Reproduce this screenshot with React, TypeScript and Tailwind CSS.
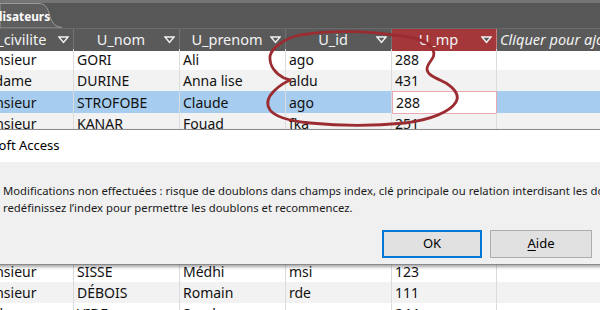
import React from 'react';

const font = { fontFamily: '"Segoe UI", "Noto Sans", "Open Sans", sans-serif' };

type Row = [string, string, string, string, string];

const rows: Row[] = [
  ['Monsieur', 'GORI', 'Ali', 'ago', '288'],
  ['Madame', 'DURINE', 'Anna lise', 'aldu', '431'],
  ['Monsieur', 'STROFOBE', 'Claude', 'ago', '288'],
  ['Monsieur', 'KANAR', 'Fouad', 'fka', '251'],
  ['Madame', 'BELLE', 'Julie', 'jbe', '302'],
  ['Monsieur', 'DURAND', 'Marc', 'mdu', '412'],
  ['Madame', 'PETIT', 'Sylvie', 'spe', '178'],
  ['Monsieur', 'LEROY', 'Paul', 'ple', '365'],
  ['Madame', 'MOREAU', 'Anne', 'amo', '209'],
  ['Monsieur', 'GARNIER', 'Luc', 'lga', '154'],
  ['Monsieur', 'SISSE', 'Médhi', 'msi', '123'],
  ['Monsieur', 'DÉBOIS', 'Romain', 'rde', '111'],
  ['Madame', 'VIDE', 'Sandra', 'vsa', '244'],
];

const cols = 'grid grid-cols-[103px_106px_106px_106px_105px_220px]';

const Arrow = () => (
  <svg width="11" height="8" viewBox="0 0 11 8" className="shrink-0">
    <polygon points="1,1 10,1 5.5,6.5" fill="#5a5a5a" stroke="#f2f2f2" strokeWidth="1.4" />
  </svg>
);

const HeadCell = ({ label, active }: { label: string; active?: boolean }) => (
  <div
    className={`flex items-center pr-[4px] border-r ${
      active ? 'bg-[#a4373a] border-[#c97b7d]' : 'bg-[#5a5a5a] border-[#727272]'
    }`}
  >
    <span className="flex-1 text-center text-[14.5px] text-[#f3f3f3] pl-[4px]">{label}</span>
    <Arrow />
  </div>
);

const App: React.FC = () => {
  return (
    <div className="relative w-[600px] h-[310px] overflow-hidden bg-white" style={font}>
      {/* onglet de la table */}
      <div className="h-[28px] bg-[#575757] border-t-[3px] border-[#747474] flex">
        <div className="relative w-[62px] h-full">
          <svg width="62" height="25" viewBox="0 0 62 25" className="absolute left-0 top-0">
            <path d="M0 0.5 H38 C45 0.5 47 4 49 10 C51 18 54 24 62 24.5 L62 25 L0 25 Z" fill="#5e5e5e" stroke="#9a9a9a" strokeWidth="1" />
          </svg>
          <span className="absolute left-[-1px] top-[5px] text-[11.8px] font-bold text-white">lisateurs</span>
        </div>
      </div>

      <div className="-ml-[29px]">
        {/* en-têtes */}
        <div className={`${cols} h-[21px] border-t border-[#6a6a6a]`}>
          <HeadCell label="U_civilite" />
          <HeadCell label="U_nom" />
          <HeadCell label="U_prenom" />
          <HeadCell label="U_id" />
          <HeadCell label="U_mp" active />
          <div className="bg-[#5a5a5a] flex items-center pl-[3px] text-[14.5px] italic text-[#f3f3f3]">Cliquer pour ajouter</div>
        </div>

        {rows.map((r, i) => {
          const selected = i === 2;
          const bg = selected ? 'bg-[#a6cdf0]' : i % 2 === 0 ? 'bg-white' : 'bg-[#f2f2f2]';
          return (
            <div key={i} className={`${cols} h-[21.2px] ${bg} text-[14px] text-[#111]`}>
              {r.map((c, j) => (
                <div
                  key={j}
                  className={`flex items-center px-[3px] border-r ${
                    selected && j === 4 ? 'bg-white border border-[#eaa9b0]' : 'border-[#dcdcdc]'
                  }`}
                >
                  {c}
                </div>
              ))}
              <div className="border-r border-[#dcdcdc]" />
            </div>
          );
        })}
      </div>

      {/* annotation rouge */}
      <svg width="600" height="310" className="absolute left-0 top-0 pointer-events-none">
        <path
          d="M433 50 C430 42 418 37 393 35 C368 31 330 30 300 35 C286 38 272 47 270 56 C269 66 276 74 284 78 C287 79 289 80 291 80 C285 82 279 86 274 91 C268 97 266 104 270 110 C275 117 290 121 310 123 C340 126 375 126 405 123 C430 120 450 112 456 102 C460 95 455 89 446 83 C436 78 427 75 427 69 C427 62 437 58 433 50"
          fill="none"
          stroke="#9b2c31"
          strokeWidth="2.8"
          strokeLinecap="round"
        />
      </svg>

      {/* boîte de dialogue */}
      <div className="absolute left-[-52px] top-[129px] w-[700px] border-y border-[#8a8a8a] shadow-[0_2px_3px_rgba(0,0,0,0.35)]">
        <div className="h-[32px] bg-white flex items-center pl-[10px] text-[13px] text-black">Microsoft Access</div>
        <div className="bg-[#f0f0f0] h-[102px] pl-[55px] pr-[56px] pt-[20px]">
          <p className="whitespace-nowrap text-[11.3px] leading-[17px] text-[#1a1a1a]">
            Modifications non effectuées : risque de doublons dans champs index, clé principale ou relation interdisant les doublons. Modifiez les données
          </p>
          <p className="whitespace-nowrap text-[11.3px] leading-[17px] text-[#1a1a1a]">
            redéfinissez l’index pour permettre les doublons et recommencez.
          </p>
          <div className="flex justify-end gap-[8px] mt-[14px]">
            <button className="w-[100px] h-[28px] bg-[#e1e1e1] border-2 border-[#0078d7] text-[13px] text-black">OK</button>
            <button className="w-[102px] h-[28px] bg-[#e1e1e1] border border-[#adadad] text-[13px] text-black">
              <span className="underline underline-offset-2">A</span>ide
            </button>
          </div>
        </div>
      </div>
    </div>
  );
};

export default App;
